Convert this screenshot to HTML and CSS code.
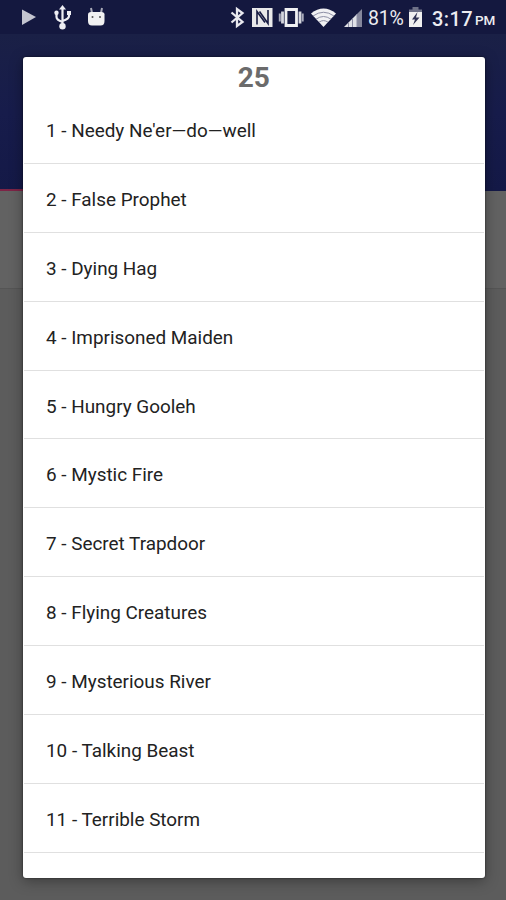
FILE: index.html
```html
<!DOCTYPE html>
<html lang="en">
<head>
<meta charset="utf-8">
<title>Encounters</title>
<link rel="stylesheet" href="styles.css">
</head>
<body>
<div class="screen">
  <header class="status">
    <svg class="left-icons" width="110" height="34" viewBox="0 0 110 34">
      <path d="M22 9.500 36 17 22 25Z" fill="#c4c5d0"/>
      <path d="M62.500 8V26M56.500 13V17Q56.500 20 62.500 22M69 13V16Q69 19 62.500 21" fill="none" stroke="#eeeef3" stroke-width="2.200"/>
      <g fill="#eeeef3"><path d="M59 9.500 62.500 5 66 9.500Z"/><circle cx="62.500" cy="26.300" r="3.200"/><circle cx="56.500" cy="12.800" r="2.200"/><path d="M67 11h4v4h-4z"/></g>
      <path d="M91 8l1 5M102 8l-1 5" stroke="#a9aab8" stroke-width="2"/>
      <path d="M88 14.500q0-2.500 3-2.500h10.500q3 0 3 2.500V21q0 4.500-4 4.500h-8.500q-4 0-4-4.500Z" fill="#f1f1f1"/>
      <circle cx="92.500" cy="17" r="1" fill="#555"/><circle cx="100" cy="17" r="1" fill="#555"/>
    </svg>
    <svg class="right-icons" width="140" height="34" viewBox="225 0 140 34">
      <path d="M231.500 12.500 242.500 22 237 26V9L242.500 13 231.500 22.500" fill="none" stroke="#e9e9ef" stroke-width="2.300"/>
      <path d="M252 8h20.500v19H252z" fill="#e9e9ea"/>
      <path d="M257 24.500V11.500L265 22.500M259.500 11.500 268 23.500V10" fill="none" stroke="#171b42" stroke-width="1.600"/>
      <path d="M286 9.500h10.500v16H286z" fill="#171b42" stroke="#f0f0f2" stroke-width="2.800"/>
      <path d="M282.500 11.500v12M300 11.500v12" stroke="#d5d6de" stroke-width="2.800"/>
      <path d="M279.800 13.500v8M302.700 13.500v8" stroke="#a9abbb" stroke-width="2"/>
      <path d="M311 13.500Q323.500 3.500 336 13.500L323.500 27Z" fill="#f1f1f3"/>
      <path d="M313 16Q323.500 8.500 334 16M316 19.200Q323.500 13.800 331 19.200M319 22.200Q323.500 19 328 22.200" fill="none" stroke="#8d8fa5" stroke-width="1"/>
      <path d="M344 27 357 14V27Z" fill="#e1e2e7"/>
      <path d="M357 27V14L362 9V27Z" fill="#85879c"/>
      <path d="M348.500 22.500v4.500M352.500 18.500v8.500M357 14v13" stroke="#8d8fa5" stroke-width="1"/>
    </svg>
    <span class="percent">81%</span>
    <svg class="battery" width="15" height="22" viewBox="0 0 15 22">
      <path d="M4.500 1h6v2.500H14V8H1V3.500h3.500Z" fill="#6e7187"/>
      <path d="M1 6h13v15H1Z" fill="#f0f0f0"/>
      <path d="M9.500 6 4 13.500h3L5 19l6.500-7.500H8Z" fill="#303354"/>
    </svg>
    <span class="clock">3:17</span><span class="meridiem">PM</span>
  </header>
  <div class="appbar"></div>
  <div class="tab"></div>
  <div class="backdrop"></div>
  <main class="dialog">
    <h1>25</h1>
    <ul>
      <li>1 - Needy Ne'er—do—well</li>
      <li>2 - False Prophet</li>
      <li>3 - Dying Hag</li>
      <li>4 - Imprisoned Maiden</li>
      <li>5 - Hungry Gooleh</li>
      <li>6 - Mystic Fire</li>
      <li>7 - Secret Trapdoor</li>
      <li>8 - Flying Creatures</li>
      <li>9 - Mysterious River</li>
      <li>10 - Talking Beast</li>
      <li>11 - Terrible Storm</li>
    </ul>
  </main>
</div>
</body>
</html>
```
FILE: styles.css
```css
* { box-sizing: border-box; }
body { margin: 0; font-family: Roboto, sans-serif; }
.screen {
  position: relative;
  display: flex;
  flex-direction: column;
  width: 506px;
  height: 900px;
  overflow: hidden;
}
.status {
  display: flex;
  align-items: center;
  height: 34px;
  flex: none;
  background: #14183f;
  color: #ececf1;
  white-space: nowrap;
}
.status svg { flex: none; }
.right-icons { margin-left: 115px; }
.percent { width: 37px; margin-left: 3px; padding-top: 3px; font-size: 19.5px; letter-spacing: -0.2px; }
.battery { margin-left: 3px; }
.clock { width: 42px; margin-left: 9px; padding-top: 3px; font-size: 20px; font-weight: 500; letter-spacing: 0.4px; }
.meridiem { margin-left: 1px; padding-top: 6px; font-size: 13.5px; font-weight: 500; }
.appbar {
  flex: none;
  height: 157px;
  background:
    linear-gradient(#7d2446, #7d2446) left bottom / 24px 2px no-repeat,
    linear-gradient(#1a2046, #171c4b 50%, #141947);
}
.tab { flex: none; height: 98px; background: #626262; border-bottom: 1px solid #555; }
.backdrop { flex: 1; background: #5c5c5c; }
.dialog {
  position: absolute;
  top: 57px;
  left: 23px;
  width: 461.5px;
  height: 821px;
  overflow: hidden;
  background: #fff;
  border-radius: 3px;
  box-shadow: 0 3px 14px rgba(0, 0, 0, 0.35), 0 0 2px rgba(0, 0, 0, 0.65);
}
h1 {
  height: 38px;
  margin: 0;
  line-height: 41px;
  text-align: center;
  font-size: 28px;
  font-weight: 700;
  color: #6b6b6b;
}
ul { margin: 0; padding: 0 1px; list-style: none; }
li {
  height: 68.9px;
  padding-left: 22px;
  border-bottom: 1px solid #e0e0e0;
  line-height: 71px;
  font-size: 18.9px;
  color: #222;
  white-space: nowrap;
}
```
